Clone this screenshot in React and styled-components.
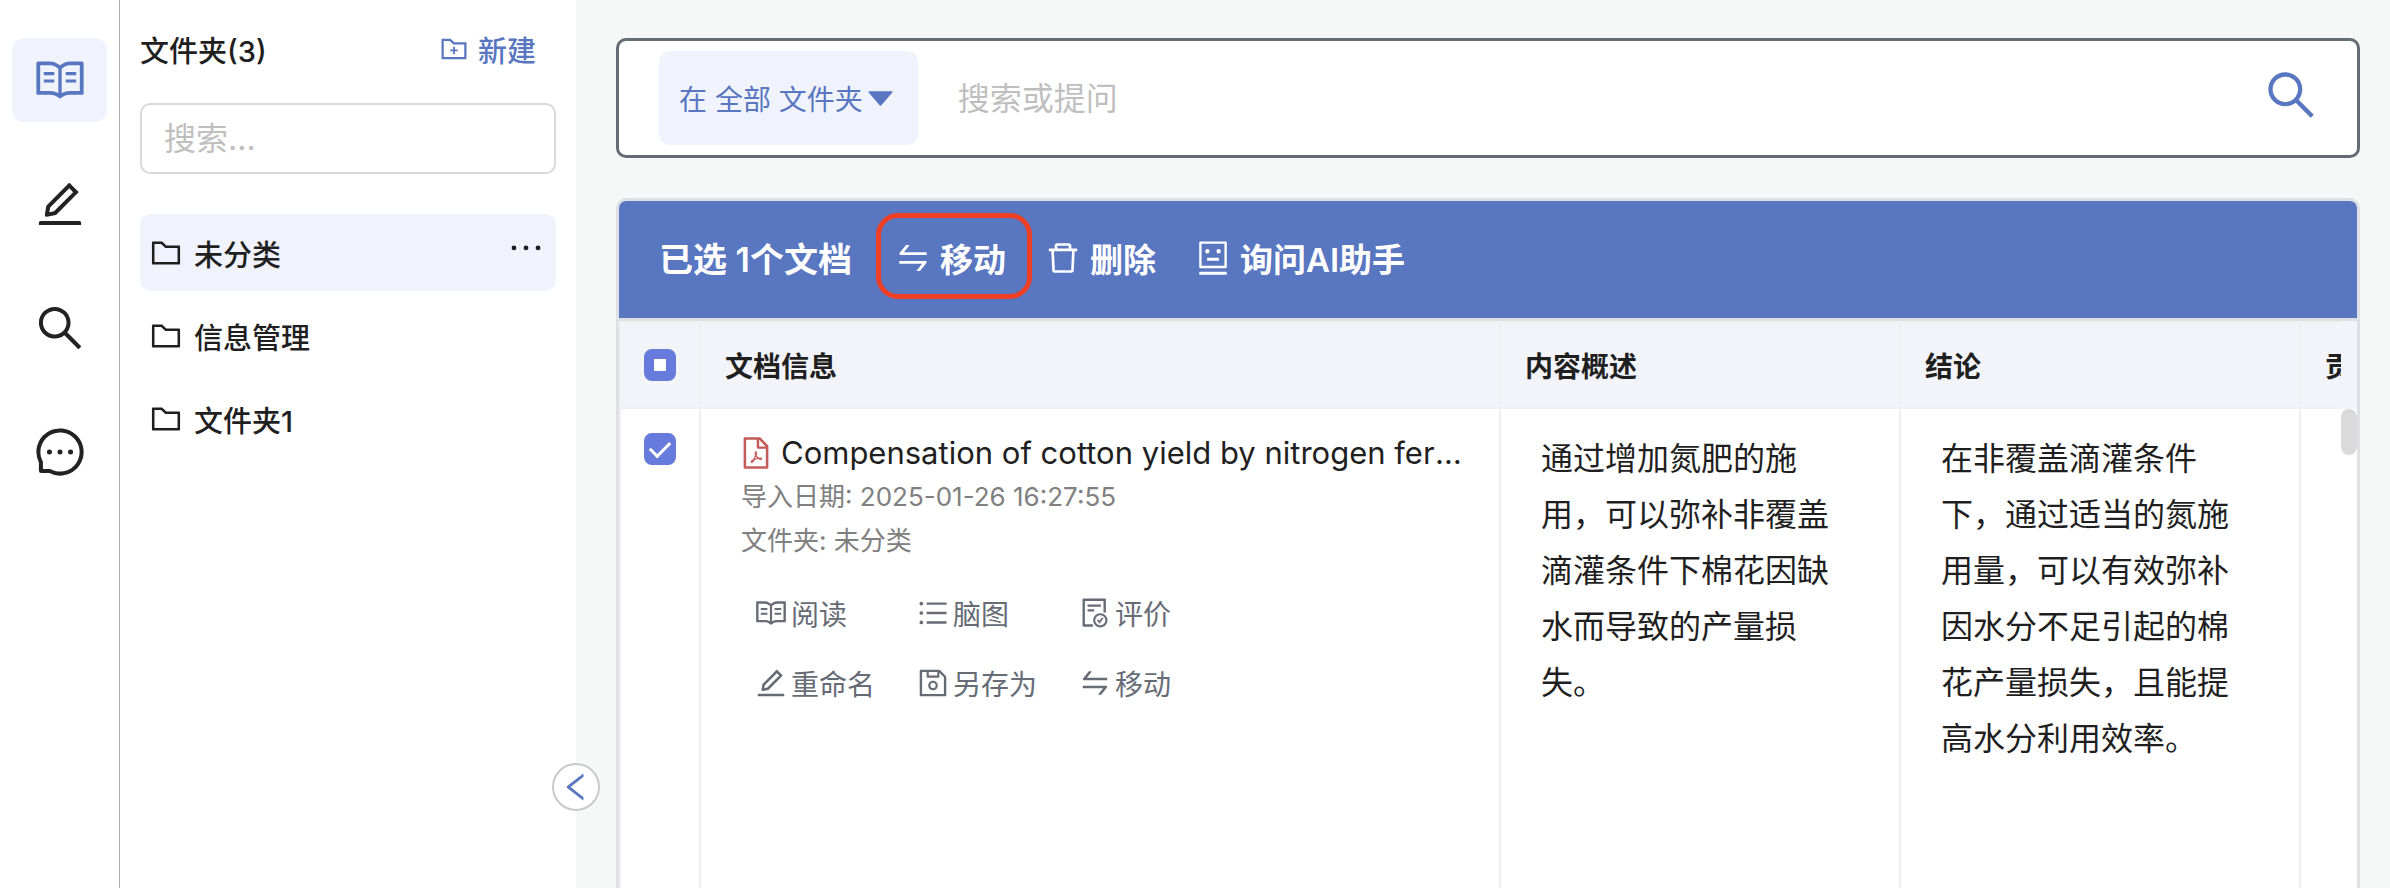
import React, { useState } from "react";
import styled, { createGlobalStyle } from "styled-components";
import {
  AiFillCaretDown,
  AiOutlineDelete,
  AiOutlineEdit,
  AiOutlineEllipsis,
  AiOutlineFileDone,
  AiOutlineFilePdf,
  AiOutlineFolder,
  AiOutlineFolderAdd,
  AiOutlineLeft,
  AiOutlineMessage,
  AiOutlineRead,
  AiOutlineRobot,
  AiOutlineSave,
  AiOutlineSearch,
  AiOutlineSwap,
  AiOutlineUnorderedList,
} from "react-icons/ai";

const GlobalStyle = createGlobalStyle`
  * {
    box-sizing: border-box;
  }

  body {
    margin: 0;
    color: #1f1f1f;
    background: #f6f8f8;
    font-family: Inter, "Noto Sans CJK SC", sans-serif;
  }

  button,
  input {
    font-family: inherit;
    color: inherit;
  }

  button {
    padding: 0;
    border: none;
    background: none;
    cursor: pointer;
  }

  svg {
    display: block;
    flex: none;
  }
`;

// Layout
const Page = styled.div`
  display: flex;
  height: 100vh;
  overflow: hidden;
`;

const Rail = styled.nav`
  flex: none;
  width: 120px;
  padding: 38px 12px;
  display: flex;
  flex-direction: column;
  gap: 40px;
  background: #fff;
  border-right: 1px solid #a9abae;
`;

const RailButton = styled.button`
  height: 84px;
  display: flex;
  align-items: center;
  justify-content: center;
  border-radius: 12px;
  font-size: 54px;
  color: ${(props) => (props.$active ? "#5976c1" : "#222")};
  background: ${(props) => (props.$active ? "#f0f3fc" : "transparent")};
`;

// Folder list
const Sidebar = styled.aside`
  position: relative;
  flex: none;
  width: 456px;
  padding: 28px 20px;
  background: #fff;
`;

const SidebarHeader = styled.div`
  display: flex;
  align-items: center;
  justify-content: space-between;
  height: 42px;
  padding-right: 20px;
`;

const SidebarTitle = styled.h2`
  margin: 0;
  font-size: 29px;
  font-weight: 500;
`;

const NewButton = styled.button`
  display: flex;
  align-items: center;
  gap: 8px;
  font-size: 29px;
  font-weight: 500;
  color: #5976c1;

  svg {
    font-size: 32px;
  }
`;

const FolderSearch = styled.input`
  width: 100%;
  height: 71px;
  margin: 33px 0 40px;
  padding: 0 22px;
  border: 2px solid #d9d9d9;
  border-radius: 10px;
  font-size: 32px;
  outline: none;

  &::placeholder {
    color: #bfbfbf;
  }
`;

const FolderList = styled.ul`
  margin: 0;
  padding: 0;
  list-style: none;
  display: flex;
  flex-direction: column;
  gap: 6px;
`;

const FolderItem = styled.li`
  display: flex;
  align-items: center;
  height: 77px;
  padding: 0 8px;
  border-radius: 10px;
  background: ${(props) => (props.$active ? "#f0f3fc" : "transparent")};
`;

const FolderButton = styled.button`
  flex: 1;
  display: flex;
  align-items: center;
  gap: 10px;
  font-size: 29px;
  font-weight: 500;

  svg {
    font-size: 36px;
  }
`;

const MoreButton = styled.button`
  align-self: flex-start;
  padding-top: 12px;
  font-size: 44px;
`;

const CollapseButton = styled.button`
  position: absolute;
  top: 763px;
  right: -24px;
  width: 48px;
  height: 48px;
  display: flex;
  align-items: center;
  justify-content: center;
  border: 2px solid #c9c9c9;
  border-radius: 50%;
  background: #fff;
  color: #5976c1;
  font-size: 36px;
`;

// Main column
const Main = styled.main`
  flex: 1;
  min-width: 0;
  display: flex;
  flex-direction: column;
  gap: 40px;
  padding: 38px 30px 0 40px;
`;

const SearchBar = styled.form`
  flex: none;
  display: flex;
  align-items: center;
  height: 120px;
  padding: 0 37px 0 40px;
  border: 3px solid #646b74;
  border-radius: 10px;
  background: #fff;
`;

const ScopeButton = styled.button`
  height: 94px;
  padding: 0 20px;
  display: flex;
  align-items: center;
  border-radius: 10px;
  font-size: 28px;
  color: #5976c1;
  background: #f0f3fc;

  svg {
    font-size: 35px;
  }
`;

const SearchInput = styled.input`
  flex: 1;
  min-width: 0;
  padding: 0 40px;
  border: none;
  outline: none;
  font-size: 32px;

  &::placeholder {
    color: #bfbfbf;
  }
`;

const SubmitButton = styled.button`
  padding-bottom: 7px;
  font-size: 58px;
  color: #5976c1;
`;

const Card = styled.section`
  flex: 1;
  min-height: 0;
  display: flex;
  flex-direction: column;
  overflow: hidden;
  border: 3px solid #dfe0e4;
  border-bottom: none;
  border-radius: 10px 10px 0 0;
  background: #fff;
`;

const Toolbar = styled.div`
  flex: none;
  display: flex;
  align-items: center;
  gap: 38px;
  height: 120px;
  padding: 0 40px 4px;
  border-bottom: 3px solid #dfe0e4;
  background: #5976c1;
  color: #fff;
`;

const SelectedCount = styled.span`
  padding-right: 4px;
  font-size: 34px;
  font-weight: 600;
`;

const ToolButton = styled.button`
  position: relative;
  display: flex;
  align-items: center;
  gap: 8px;
  font-size: 33px;
  font-weight: 600;

  svg {
    font-size: 38px;
  }
`;

const Highlight = styled.span`
  position: absolute;
  inset: -21px -26px -17px -18px;
  border: 5px solid #ee4026;
  border-radius: 22px;
  pointer-events: none;
`;

const TableWrap = styled.div`
  flex: 1;
  min-height: 0;
  display: flex;
`;

const TableScroll = styled.div`
  flex: 1;
  min-width: 0;
  overflow: hidden;
`;

const Gutter = styled.div`
  flex: none;
  width: 16px;
`;

const GutterHead = styled.div`
  height: 88px;
  background: #f3f4fa;
`;

const ScrollThumb = styled.div`
  height: 46px;
  border-radius: 8px;
  background: #dadada;
`;

const Table = styled.table`
  width: 2082px;
  height: 100%;
  table-layout: fixed;
  border-spacing: 0;
  border-left: 2px solid #f0f0f2;
`;

const Col = styled.col`
  width: ${(props) => props.$width}px;
`;

const Th = styled.th`
  height: 88px;
  padding: 0 ${(props) => props.$inset || 24}px;
  border: solid #f0f0f2;
  border-width: 2px 2px 2px 0;
  background: #f3f4fa;
  font-size: 28px;
  font-weight: 600;
  text-align: left;
`;

const Td = styled.td`
  padding: ${(props) => props.$padding || "22px 48px 20px 40px"};
  border-right: 2px solid #f0f0f2;
  vertical-align: top;
  font-size: 32px;
  line-height: 56px;
`;

const Checkbox = styled.input`
  appearance: none;
  display: flex;
  align-items: center;
  justify-content: center;
  width: 32px;
  height: 32px;
  margin: 0;
  border: 2px solid #667bdb;
  border-radius: 8px;

  &:checked,
  &:indeterminate {
    background: #667bdb;
  }

  &:checked::after {
    content: "";
    width: 9px;
    height: 17px;
    margin-bottom: 5px;
    border: solid #fff;
    border-width: 0 3px 3px 0;
    transform: rotate(45deg);
  }

  &:indeterminate::after {
    content: "";
    width: 12px;
    height: 12px;
    background: #fff;
  }
`;

const DocTitle = styled.div`
  display: flex;
  align-items: center;
  gap: 7px;
  height: 44px;
  margin-left: -3px;

  svg {
    color: #c55b58;
    font-size: 36px;
  }
`;

const DocLink = styled.a`
  overflow: hidden;
  text-overflow: ellipsis;
  white-space: nowrap;
  color: inherit;
  text-decoration: none;
  font-size: 31px;
  line-height: 44px;
`;

const Meta = styled.div`
  font-size: 26px;
  line-height: 44px;
  color: #808080;
`;

const Actions = styled.div`
  display: grid;
  grid-template-columns: repeat(3, 162px);
  gap: 22px 0;
  padding: 26px 13px;
`;

const ActionButton = styled.button`
  display: flex;
  align-items: center;
  gap: 3px;
  height: 48px;
  font-size: 28px;
  color: #666b75;

  svg {
    font-size: 34px;
  }
`;

const railItems = [
  { icon: AiOutlineRead, label: "文献" },
  { icon: AiOutlineEdit, label: "写作" },
  { icon: AiOutlineSearch, label: "检索" },
  { icon: AiOutlineMessage, label: "对话" },
];

const folders = ["未分类", "信息管理", "文件夹1"];

const actions = [
  { icon: AiOutlineRead, label: "阅读" },
  { icon: AiOutlineUnorderedList, label: "脑图" },
  { icon: AiOutlineFileDone, label: "评价" },
  { icon: AiOutlineEdit, label: "重命名" },
  { icon: AiOutlineSave, label: "另存为" },
  { icon: AiOutlineSwap, label: "移动" },
];

const FolderPanel = () => {
  const [active, setActive] = useState(folders[0]);

  return (
    <Sidebar>
      <SidebarHeader>
        <SidebarTitle>文件夹({folders.length})</SidebarTitle>
        <NewButton type="button">
          <AiOutlineFolderAdd />
          新建
        </NewButton>
      </SidebarHeader>
      <FolderSearch type="text" aria-label="搜索文件夹" placeholder="搜索..." />
      <FolderList>
        {folders.map((name) => (
          <FolderItem key={name} $active={name === active}>
            <FolderButton type="button" onClick={() => setActive(name)}>
              <AiOutlineFolder />
              {name}
            </FolderButton>
            {name === active && (
              <MoreButton type="button" aria-label="更多">
                <AiOutlineEllipsis />
              </MoreButton>
            )}
          </FolderItem>
        ))}
      </FolderList>
      <CollapseButton type="button" aria-label="收起">
        <AiOutlineLeft />
      </CollapseButton>
    </Sidebar>
  );
};

const DocumentTable = () => {
  const [checked, setChecked] = useState(true);
  const toggle = () => setChecked(!checked);

  return (
    <TableWrap>
      <TableScroll>
        <Table>
          <colgroup>
            <Col $width={80} />
            <Col $width={800} />
            <Col $width={400} />
            <Col $width={400} />
            <Col $width={400} />
          </colgroup>
          <thead>
            <tr>
              <Th $inset={23}>
                <Checkbox
                  type="checkbox"
                  aria-label="全选"
                  checked={false}
                  onChange={toggle}
                  ref={(el) => {
                    if (el) el.indeterminate = checked;
                  }}
                />
              </Th>
              <Th>文档信息</Th>
              <Th>内容概述</Th>
              <Th>结论</Th>
              <Th>贡献</Th>
            </tr>
          </thead>
          <tbody>
            <tr>
              <Td $padding="24px 23px">
                <Checkbox
                  type="checkbox"
                  aria-label="选择文档"
                  checked={checked}
                  onChange={toggle}
                />
              </Td>
              <Td $padding="22px 34px 22px 40px">
                <DocTitle>
                  <AiOutlineFilePdf />
                  <DocLink href="#">Compensation of cotton yield by nitrogen fertilizer</DocLink>
                </DocTitle>
                <Meta>导入日期: 2025-01-26 16:27:55</Meta>
                <Meta>文件夹: 未分类</Meta>
                <Actions>
                  {actions.map(({ icon: Icon, label }) => (
                    <ActionButton type="button" key={label}>
                      <Icon />
                      {label}
                    </ActionButton>
                  ))}
                </Actions>
              </Td>
              <Td>通过增加氮肥的施用，可以弥补非覆盖滴灌条件下棉花因缺水而导致的产量损失。</Td>
              <Td>
                在非覆盖滴灌条件下，通过适当的氮施用量，可以有效弥补因水分不足引起的棉花产量损失，且能提高水分利用效率。
              </Td>
              <Td />
            </tr>
          </tbody>
        </Table>
      </TableScroll>
      <Gutter>
        <GutterHead />
        <ScrollThumb />
      </Gutter>
    </TableWrap>
  );
};

const App = () => (
  <>
    <GlobalStyle />
    <Page>
      <Rail>
        {railItems.map(({ icon: Icon, label }, index) => (
          <RailButton type="button" key={label} aria-label={label} $active={index === 0}>
            <Icon />
          </RailButton>
        ))}
      </Rail>
      <FolderPanel />
      <Main>
        <SearchBar onSubmit={(e) => e.preventDefault()}>
          <ScopeButton type="button">
            在 全部 文件夹
            <AiFillCaretDown />
          </ScopeButton>
          <SearchInput type="text" aria-label="搜索或提问" placeholder="搜索或提问" />
          <SubmitButton type="submit" aria-label="搜索">
            <AiOutlineSearch />
          </SubmitButton>
        </SearchBar>
        <Card>
          <Toolbar>
            <SelectedCount>已选 1个文档</SelectedCount>
            <ToolButton type="button">
              <AiOutlineSwap />
              移动
              <Highlight />
            </ToolButton>
            <ToolButton type="button">
              <AiOutlineDelete />
              删除
            </ToolButton>
            <ToolButton type="button">
              <AiOutlineRobot />
              询问AI助手
            </ToolButton>
          </Toolbar>
          <DocumentTable />
        </Card>
      </Main>
    </Page>
  </>
);

export default App;
